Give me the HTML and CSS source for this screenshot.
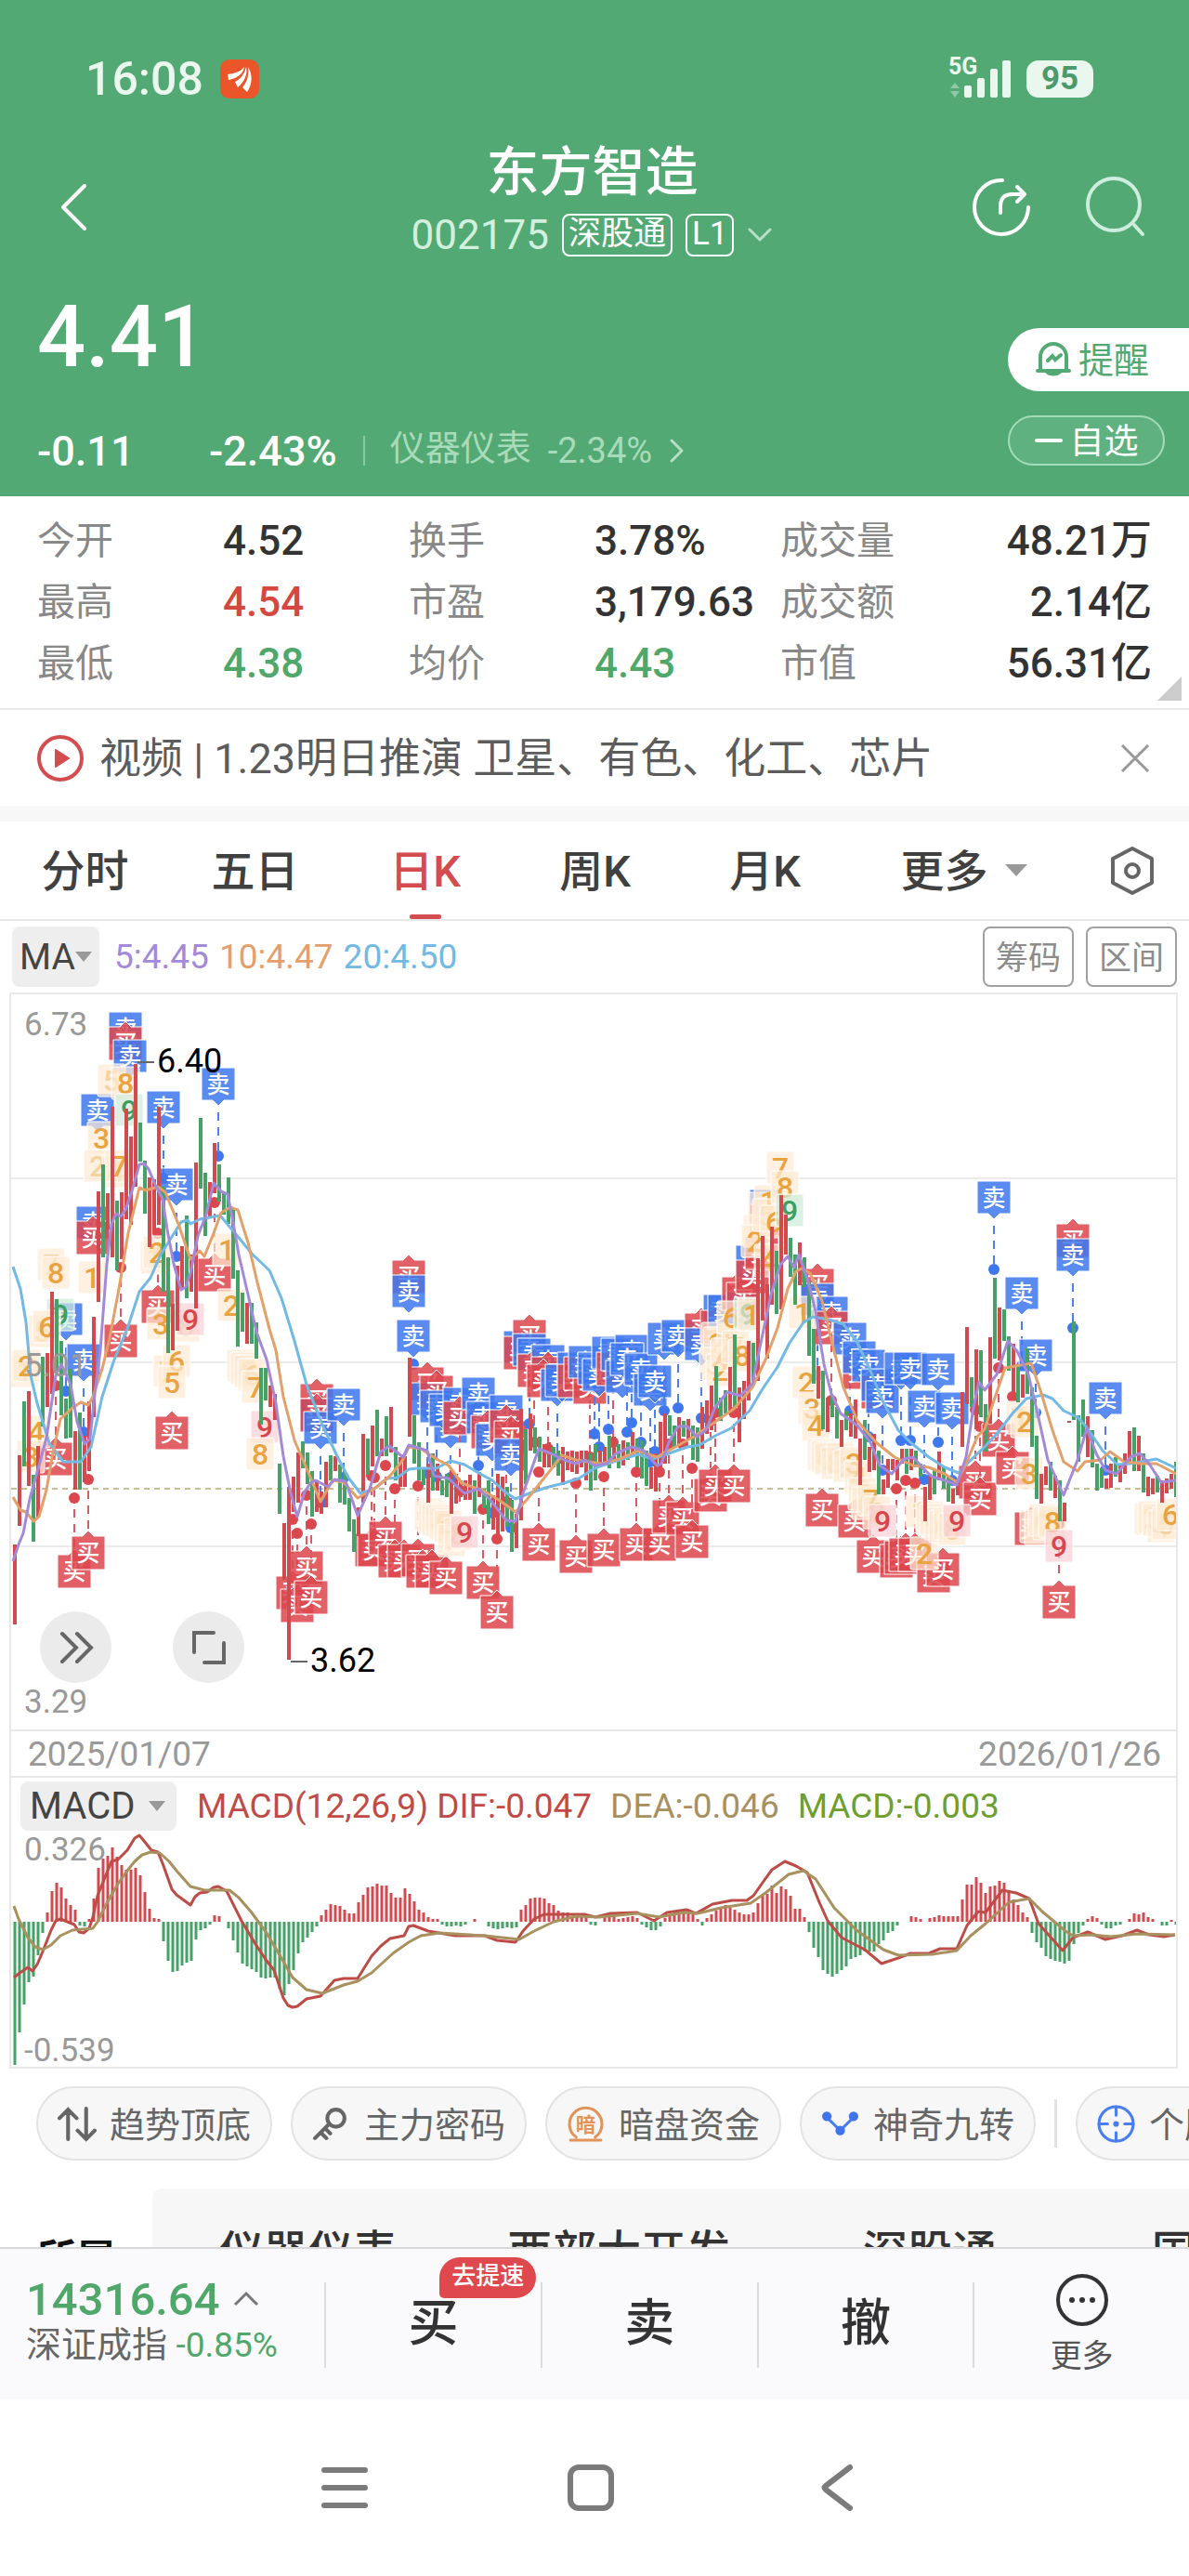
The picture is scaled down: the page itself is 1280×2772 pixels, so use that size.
FILE: index.html
```html
<!DOCTYPE html>
<html lang="zh-CN">
<head>
    <meta charset="UTF-8">
    <meta name="viewport" content="width=device-width, initial-scale=1.0">
    <title>东方智造 002175</title>
    <link rel="stylesheet" href="styles.css">
</head>
<body>
    <header class="header">
        <div class="status-bar">
            <span class="clock">16:08</span>
            <svg class="app-badge" viewBox="0 0 42 42">
                <rect width="42" height="42" rx="10" fill="#ea5529"/>
                <path d="M8 16c8-1 14-3 18-8-1 7-7 12-17 14zM16 24c6-3 10-8 12-16 2 9-3 17-9 22zM24 30c5-6 7-12 6-22 5 8 5 18-1 27z" fill="#fff"/>
            </svg>
            <div class="status-right">
                <svg class="signal" viewBox="0 0 70 50">
                    <text x="0" y="20" class="signal-text">5G</text>
                    <path d="M2 35l5-6 5 6zM2 38l5 7 5-7z" fill="#8fc9a5"/>
                    <rect x="17" y="32" width="8" height="13" rx="2"/>
                    <rect x="31" y="24" width="8" height="21" rx="2"/>
                    <rect x="45" y="14" width="8" height="31" rx="2"/>
                    <rect x="58" y="5" width="9" height="40" rx="2"/>
                </svg>
                <span class="battery">95</span>
            </div>
        </div>

        <div class="title-bar">
            <button class="icon-btn" aria-label="返回">
                <svg width="50" height="60" viewBox="0 0 50 60"><path d="M37 7L14 30l23 23" class="line"/></svg>
            </button>
            <div class="title-block">
                <h1>东方智造</h1>
                <div class="code-row">
                    <span class="code">002175</span>
                    <span class="tag">深股通</span>
                    <span class="tag">L1</span>
                    <svg width="28" height="18" viewBox="0 0 28 18"><path d="M3 3l11 11L25 3" class="line thin"/></svg>
                </div>
            </div>
            <div class="title-actions">
                <button class="icon-btn" aria-label="分享">
                    <svg width="66" height="66" viewBox="0 0 66 66">
                        <path d="M34 4A29 29 0 1 0 62 33" class="line"/>
                        <path d="M32 39v-7q0-13 13-13h12M50 11l8 8-8 8" class="line"/>
                    </svg>
                </button>
                <button class="icon-btn" aria-label="搜索">
                    <svg width="66" height="66" viewBox="0 0 66 66">
                        <circle cx="30" cy="30" r="28" class="line pale"/>
                        <path d="M52 52l9 10" class="line pale"/>
                    </svg>
                </button>
            </div>
        </div>

        <div class="quote">
            <div class="quote-left">
                <div class="price">4.41</div>
                <div class="change-row">
                    <span class="change">-0.11</span>
                    <span class="percent">-2.43%</span>
                    <a class="industry" href="#">
                        <span>仪器仪表</span>
                        <span>-2.34%</span>
                        <svg width="18" height="28" viewBox="0 0 18 28"><path d="M3 3l11 11L3 25" class="line thin"/></svg>
                    </a>
                </div>
            </div>
            <div class="quote-right">
                <button class="remind">
                    <svg width="38" height="40" viewBox="0 0 38 40">
                        <path d="M5 31V17a14 14 0 0 1 28 0v14M2 32h34M12 33a8 5 0 0 0 14 0M13 21l5-5 3 4 6-5" fill="none" stroke="#53a974" stroke-width="4" stroke-linecap="round"/>
                    </svg>
                    提醒
                </button>
                <button class="watch">
                    <i class="minus"></i>自选
                </button>
            </div>
        </div>
    </header>

    <section class="stats">
        <table>
            <tr><th>今开</th><td>4.52</td><th>换手</th><td>3.78%</td><th>成交量</th><td>48.21万</td></tr>
            <tr><th>最高</th><td class="up">4.54</td><th>市盈</th><td>3,179.63</td><th>成交额</th><td>2.14亿</td></tr>
            <tr><th>最低</th><td class="down">4.38</td><th>均价</th><td class="down">4.43</td><th>市值</th><td>56.31亿</td></tr>
        </table>
    </section>

    <div class="news">
        <svg width="52" height="52" viewBox="0 0 52 52">
            <circle cx="26" cy="26" r="23" fill="none" stroke="#d24c50" stroke-width="4"/>
            <path d="M21 17l14 9-14 9z" fill="#d24c50" stroke="#d24c50" stroke-width="2" stroke-linejoin="round"/>
        </svg>
        <a href="#">视频 | 1.23明日推演 卫星、有色、化工、芯片</a>
        <button class="icon-btn" aria-label="关闭">
            <svg width="32" height="32" viewBox="0 0 32 32"><path d="M2 2l28 28M30 2L2 30" stroke="#999" stroke-width="3" fill="none"/></svg>
        </button>
    </div>

    <nav class="tabs">
        <button>分时</button>
        <button>五日</button>
        <button class="active">日K</button>
        <button>周K</button>
        <button>月K</button>
        <button class="more">更多<i class="caret"></i></button>
        <button class="setting" aria-label="设置">
            <svg width="50" height="54" viewBox="0 0 50 54">
                <path d="M25 3L46 14v26L25 51 4 40V14z" fill="none" stroke="#666" stroke-width="4" stroke-linejoin="round"/>
                <circle cx="25" cy="27" r="7" fill="none" stroke="#666" stroke-width="4"/>
            </svg>
        </button>
    </nav>

    <div class="ma-row">
        <label class="picker">
            <select aria-label="主图指标"><option>MA</option></select>
            <i class="caret"></i>
        </label>
        <span class="ma5">5:4.45</span>
        <span class="ma10">10:4.47</span>
        <span class="ma20">20:4.50</span>
        <div class="ma-buttons">
            <button>筹码</button>
            <button>区间</button>
        </div>
    </div>

    <section class="panel">
        <div class="kline">
            <svg id="kline" viewBox="12 1070 1254 791"></svg>
            <div class="kline-tools">
                <button aria-label="展开">
                    <svg width="38" height="38" viewBox="0 0 38 38"><path d="M4 4l15 15L4 34M20 4l15 15-15 15"/></svg>
                </button>
                <button aria-label="全屏">
                    <svg width="38" height="38" viewBox="0 0 38 38"><path d="M3 24V3h21M35 14v21H14"/></svg>
                </button>
            </div>
        </div>
        <div class="dates">
            <span>2025/01/07</span>
            <span>2026/01/26</span>
        </div>
        <div class="macd-row">
            <label class="picker">
                <select aria-label="副图指标"><option>MACD</option></select>
                <i class="caret"></i>
            </label>
            <span class="dif">MACD(12,26,9) DIF:-0.047</span>
            <span class="dea">DEA:-0.046</span>
            <span class="macd">MACD:-0.003</span>
        </div>
        <svg id="macd" viewBox="12 1973 1254 251"></svg>
    </section>

    <div class="tools">
        <button>
            <svg viewBox="0 0 40 40"><path d="M11 36V6M2 14l9-9 9 9M30 4v31M21 27l9 9 9-9" stroke="#666" stroke-width="4"/></svg>
            <span>趋势顶底</span>
        </button>
        <button>
            <svg viewBox="0 0 40 40"><circle cx="25" cy="14" r="9" stroke="#666" stroke-width="4"/><path d="M18 20L3 35M9 29l6 6M14 25l5 5" stroke="#666" stroke-width="4"/></svg>
            <span>主力密码</span>
        </button>
        <button>
            <svg viewBox="0 0 40 40"><path d="M10 34a17 17 0 1 1 20 0M4 37h32" stroke="#e2935a" stroke-width="3"/><text x="20" y="28" class="coin">暗</text></svg>
            <span>暗盘资金</span>
        </button>
        <button>
            <svg viewBox="0 0 40 40"><path d="M6 13l14 14 14-14" stroke="#4a7df0" stroke-width="3"/><g fill="#4173ea"><circle cx="6" cy="12" r="5"/><circle cx="20" cy="27" r="5"/><circle cx="34" cy="12" r="5"/></g></svg>
            <span>神奇九转</span>
        </button>
        <i class="divider"></i>
        <button>
            <svg viewBox="0 0 40 40"><circle cx="20" cy="20" r="18" stroke="#4a7df0" stroke-width="3"/><circle cx="20" cy="20" r="3" fill="#4a7df0"/><path d="M20 2v9M20 29v9M2 20h9M29 20h9" stroke="#4a7df0" stroke-width="3"/></svg>
            <span>个股诊断</span>
        </button>
    </div>

    <div class="sectors">
        <b>所属</b>
        <div class="sector-list">
            <a href="#">仪器仪表</a>
            <a href="#">西部大开发</a>
            <a href="#">深股通</a>
            <a href="#">国企改革</a>
        </div>
    </div>

    <footer class="trade-bar">
        <div class="index">
            <div class="index-value">14316.64
                <svg width="28" height="18" viewBox="0 0 28 18"><path d="M2 15L14 3l12 12" fill="none" stroke="#777" stroke-width="3"/></svg>
            </div>
            <div class="index-name">深证成指 <span>-0.85%</span></div>
        </div>
        <button>买<span class="badge">去提速</span></button>
        <button>卖</button>
        <button>撤</button>
        <button class="trade-more">
            <svg width="56" height="56" viewBox="0 0 56 56">
                <circle cx="28" cy="28" r="26" fill="none" stroke="#333" stroke-width="4"/>
                <g fill="#333"><circle cx="17" cy="28" r="3"/><circle cx="28" cy="28" r="3"/><circle cx="39" cy="28" r="3"/></g>
            </svg>
            更多
        </button>
    </footer>

    <nav class="system-nav">
        <svg viewBox="0 0 52 52"><path d="M4 7h44M4 26h44M4 45h44"/></svg>
        <svg viewBox="0 0 52 52"><rect x="4" y="4" width="44" height="44" rx="9"/></svg>
        <svg viewBox="0 0 52 52"><path d="M40 4L14 24q-3 2 0 4l26 20"/></svg>
    </nav>

    <script src="chart.js"></script>
</body>
</html>
```
FILE: styles.css
```css
* {
    box-sizing: border-box;
}
body {
    margin: 0;
    background-color: #fff;
    color: #333;
    font-family: Roboto, "Noto Sans CJK SC", sans-serif;
    overflow-x: hidden;
}
button {
    font-family: inherit;
    color: inherit;
    background: none;
    border: none;
    padding: 0;
    cursor: pointer;
}
a {
    color: inherit;
    text-decoration: none;
}
svg {
    display: block;
    flex: none;
}
.line {
    fill: none;
    stroke: #fff;
    stroke-width: 4;
    stroke-linecap: round;
    stroke-linejoin: round;
}
.thin {
    stroke: #b5e0c4;
    stroke-width: 3;
}
.pale {
    stroke: #cdeedd;
}
.caret {
    border: 9px solid transparent;
    border-top: 11px solid #999;
    border-bottom: 0;
}

/* 顶部 */
.header {
    background-color: #53a974;
    color: #fff;
    padding: 56px 0 24px;
}
.status-bar {
    display: flex;
    align-items: center;
    height: 58px;
    padding: 0 103px 0 92px;
    color: #eaf7ef;
}
.clock {
    font-size: 50px;
    font-weight: 500;
}
.app-badge {
    width: 42px;
    margin-left: 18px;
}
.status-right {
    display: flex;
    align-items: center;
    gap: 14px;
    margin-left: auto;
}
.signal {
    width: 70px;
    fill: #eaf7ef;
    overflow: visible;
}
.signal-text {
    font-size: 25px;
    font-weight: 700;
}
.battery {
    width: 72px;
    height: 40px;
    border-radius: 13px;
    background-color: #eaf7ef;
    color: #4c9a6b;
    font-size: 35px;
    font-weight: 700;
    line-height: 40px;
    text-align: center;
}
.title-bar {
    display: flex;
    align-items: center;
    justify-content: space-between;
    height: 170px;
    margin-top: 24px;
    padding: 0 45px 0 54px;
}
.title-bar > .icon-btn {
    width: 176px;
}
.title-block {
    align-self: flex-start;
    padding-top: 16px;
    text-align: center;
}
h1 {
    margin: 0 0 12px;
    font-size: 57px;
    font-weight: 500;
    line-height: 64px;
}
.code-row {
    display: flex;
    align-items: center;
    gap: 14px;
    height: 46px;
}
.code {
    font-size: 44px;
    color: #d3f0de;
}
.tag {
    height: 46px;
    padding: 0 5px;
    border: 2px solid #fff;
    border-radius: 8px;
    font-size: 35px;
    line-height: 40px;
}
.title-actions {
    display: flex;
    gap: 58px;
}
.quote {
    display: flex;
    justify-content: space-between;
    padding-top: 15px;
}
.price {
    padding-left: 40px;
    font-size: 92px;
    font-weight: 500;
    line-height: 80px;
    margin-bottom: 57px;
}
.change-row {
    display: flex;
    align-items: center;
    height: 50px;
    padding-left: 40px;
    font-size: 45px;
    font-weight: 500;
}
.change {
    width: 185px;
}
.percent {
    margin-right: 28px;
}
.industry {
    display: flex;
    align-items: center;
    gap: 18px;
    height: 32px;
    padding-left: 27px;
    border-left: 2px solid #8ccba3;
    color: #a9dbba;
    font-size: 38px;
    line-height: 32px;
    font-weight: 400;
}
.industry span:first-child {
    padding-bottom: 6px;
}
.quote-right {
    display: flex;
    flex-direction: column;
    align-self: flex-end;
    width: 195px;
    padding-bottom: 9px;
}
.remind {
    display: flex;
    align-items: center;
    gap: 8px;
    height: 68px;
    margin-bottom: 26px;
    padding: 0 0 5px 30px;
    border-radius: 34px 0 0 34px;
    background-color: #fff;
    color: #53a974;
    font-size: 38px;
}
.remind svg {
    margin-top: 5px;
}
.watch {
    display: flex;
    align-items: center;
    justify-content: center;
    gap: 8px;
    width: 169px;
    height: 54px;
    padding-bottom: 5px;
    border: 2px solid #a5dcb8;
    border-radius: 27px;
    background-color: #5fb180;
    font-size: 37px;
}
.minus {
    width: 30px;
    height: 4px;
    margin-top: 5px;
    border-radius: 2px;
    background-color: #fff;
}

/* 行情数据 */
.stats {
    position: relative;
    padding: 15px 40px 15px;
    border-bottom: 2px solid #e8e8e8;
}
.stats::after {
    content: "";
    position: absolute;
    right: 8px;
    bottom: 8px;
    border: 13px solid #ccc;
    border-left-color: transparent;
    border-top-color: transparent;
}
table {
    width: 100%;
    table-layout: fixed;
    border-collapse: collapse;
}
th, td {
    height: 66px;
    padding: 0;
    text-align: left;
    line-height: 60px;
    white-space: nowrap;
}
th {
    color: #888;
    font-size: 41px;
    font-weight: 400;
}
td {
    font-size: 44px;
    font-weight: 500;
}
td:last-child {
    text-align: right;
}
.up {
    color: #d5483f;
}
.down {
    color: #4fa769;
}

.news {
    display: flex;
    align-items: center;
    gap: 16px;
    height: 120px;
    padding: 0 42px 0 39px;
    border-bottom: 17px solid #f7f7f7;
    color: #5c5c5c;
    font-size: 45px;
}
.news a {
    padding-bottom: 6px;
}
.news .icon-btn {
    margin-left: auto;
}

/* 周期切换 */
.tabs {
    display: flex;
    height: 107px;
    border-bottom: 2px solid #e8e8e8;
}
.tabs button {
    position: relative;
    width: 14.3%;
    padding-bottom: 6px;
    color: #404040;
    font-size: 47px;
    font-weight: 500;
}
.tabs .active {
    color: #d24c50;
}
.tabs .active::after {
    content: "";
    position: absolute;
    left: 50%;
    bottom: 0;
    width: 34px;
    height: 5px;
    margin-left: -17px;
    border-radius: 2px;
    background-color: #d24c50;
}
.tabs .more {
    display: flex;
    flex: 1;
    align-items: center;
    justify-content: center;
    gap: 18px;
}
.more .caret {
    margin-top: 6px;
    border-width: 13px 12px 0;
}
.tabs .setting {
    width: 120px;
    padding: 0 0 0 34px;
}

.ma-row {
    display: flex;
    align-items: center;
    gap: 11px;
    height: 77px;
    padding: 0 13px;
    font-size: 37px;
}
.picker {
    display: flex;
    align-items: center;
    height: 65px;
    padding: 0 8px;
    border-radius: 8px;
    background-color: #eee;
}
.picker select {
    appearance: none;
    border: none;
    padding: 0;
    background: none;
    color: #444;
    font-family: inherit;
    font-size: 39px;
}
.ma-row .picker {
    margin-right: 5px;
}
.ma5 {
    color: #a28ad9;
}
.ma10 {
    color: #e4a06a;
}
.ma20 {
    color: #72b9e4;
}
.ma-buttons {
    display: flex;
    gap: 13px;
    margin-left: auto;
}
.ma-buttons button {
    width: 98px;
    height: 65px;
    padding-bottom: 4px;
    border: 2px solid #a0a0a0;
    border-radius: 8px;
    color: #8c8c8c;
    font-size: 35px;
}

/* 图表 */
.panel {
    margin: 0 12px 0 10px;
    border: 2px solid #e8e8e8;
}
.panel > svg, .kline > svg {
    width: 100%;
}
.kline {
    position: relative;
}
.kline-tools {
    position: absolute;
    left: 31px;
    bottom: 50px;
    display: flex;
    gap: 66px;
}
.kline-tools button {
    display: flex;
    align-items: center;
    justify-content: center;
    width: 77px;
    height: 77px;
    border-radius: 50%;
    background-color: #ebebeb;
}
.kline-tools path {
    fill: none;
    stroke: #666;
    stroke-width: 4;
    stroke-linecap: round;
}
.grid {
    stroke: #ebebeb;
    stroke-width: 2;
}
.last {
    stroke: #c9bd98;
    stroke-width: 2;
    stroke-dasharray: 6 5;
}
.candle {
    stroke-width: 4;
}
.candle.r, .bar.r {
    stroke: #d04a50;
}
.candle.g, .bar.g {
    stroke: #45a166;
}
.bar {
    stroke-width: 3;
}
.ma {
    fill: none;
    stroke-width: 3;
    stroke-linejoin: round;
}
.axis {
    fill: #999;
    font-size: 35px;
}
.extreme {
    fill: #000;
    font-size: 36px;
}
.pointer {
    stroke: #666;
    stroke-width: 2;
}
.mark {
    stroke: #fff;
    stroke-width: 1;
    fill-opacity: 0.86;
}
.mark.s, .dot.s {
    fill: #3f78ee;
}
.mark.b, .dot.b {
    fill: #dc474e;
}
.stem {
    stroke-width: 2;
    stroke-dasharray: 9 7;
}
.stem.s {
    stroke: #4a7ff0;
}
.stem.b {
    stroke: #dc5a60;
}
.mark-text {
    fill: #fff;
    font-size: 25px;
    font-weight: 500;
    text-anchor: middle;
}
.nine {
    stroke: #fff;
    stroke-width: 1;
    fill: #fdebd6;
    fill-opacity: 0.7;
}
.nine.G {
    fill: #cdebd9;
}
.nine.R {
    fill: #f8d0d6;
}
.nine-text {
    fill: #e9a341;
    font-size: 32px;
    font-weight: 500;
    text-anchor: middle;
}
.nine-text.f {
    fill: #f5d3a0;
}
.nine-text.G {
    fill: #3f9f62;
}
.nine-text.R {
    fill: #d8464d;
}
.dates {
    display: flex;
    align-items: center;
    justify-content: space-between;
    height: 52px;
    padding: 0 16px 0 18px;
    border: solid #e8e8e8;
    border-width: 2px 0;
    color: #999;
    font-size: 37px;
}
.macd-row {
    display: flex;
    align-items: center;
    gap: 20px;
    height: 60px;
    padding-left: 10px;
    font-size: 37px;
}
.macd-row .picker {
    gap: 14px;
    height: 53px;
    padding: 0 12px 0 10px;
    margin-right: 2px;
}
.macd-row select {
    font-size: 40px;
}
.dif {
    color: #c04b46;
}
.dea {
    color: #a8905f;
}
.macd {
    color: #6d9f2f;
}

/* 工具入口 */
.tools {
    display: flex;
    align-items: center;
    gap: 20px;
    padding: 19px 0 30px 39px;
    overflow: hidden;
}
.tools button {
    display: flex;
    flex: none;
    align-items: center;
    gap: 15px;
    height: 80px;
    padding: 0 21px;
    border: 2px solid #e3e3e3;
    border-radius: 40px;
    background-color: #f7f7f7;
    color: #666;
    font-size: 38px;
}
.tools span {
    padding-bottom: 4px;
}
.tools svg {
    width: 41px;
    fill: none;
    stroke-linecap: round;
    overflow: visible;
}
.coin {
    fill: #e2935a;
    font-size: 21px;
    font-weight: 700;
    text-anchor: middle;
}
.divider {
    flex: none;
    width: 3px;
    height: 52px;
    background-color: #e3e3e3;
}
.sectors {
    display: flex;
    height: 63px;
    overflow: hidden;
}
.sectors b {
    width: 164px;
    padding: 52px 0 0 40px;
    flex: none;
    font-size: 42px;
    line-height: 48px;
    color: #111;
}
.sector-list {
    display: flex;
    flex: 1;
    min-width: 0;
    height: 140px;
    border-radius: 10px 0 0 0;
    background-color: #f7f7f7;
}
.sector-list a {
    flex: none;
    width: 30%;
    font-size: 48px;
    font-weight: 500;
    line-height: 138px;
    text-align: center;
    white-space: nowrap;
}

/* 底部交易栏 */
.trade-bar {
    display: flex;
    height: 164px;
    border-top: 2px solid #d8d8da;
    background-color: #fafafc;
}
.index {
    width: 349px;
    padding: 28px 0 0 28px;
    white-space: nowrap;
}
.index-value {
    display: flex;
    align-items: center;
    gap: 14px;
    height: 52px;
    color: #4fa769;
    font-size: 49px;
    font-weight: 500;
}
.index-name {
    color: #666;
    font-size: 38px;
    line-height: 46px;
}
.index-name span {
    color: #4fa769;
    font-size: 37px;
}
.trade-bar button {
    position: relative;
    flex: 1;
    height: 92px;
    margin-top: 36px;
    padding-bottom: 14px;
    border-left: 2px solid #dcdcdc;
    font-size: 54px;
    font-weight: 500;
}
.badge {
    position: absolute;
    left: 53%;
    top: -27px;
    height: 44px;
    padding: 0 13px;
    border-radius: 22px 22px 22px 5px;
    background-color: #df494d;
    color: #fff;
    font-size: 26px;
    line-height: 41px;
}
.trade-bar .trade-more {
    display: flex;
    flex-direction: column;
    align-items: center;
    justify-content: center;
    gap: 5px;
    padding: 0;
    color: #555;
    font-size: 34px;
    font-weight: 400;
}
.system-nav {
    display: flex;
    align-items: center;
    justify-content: center;
    gap: 213px;
    height: 189px;
    padding-right: 8px;
}
.system-nav svg {
    width: 52px;
    fill: none;
    stroke: #7b7b7b;
    stroke-width: 6;
    stroke-linecap: round;
}
```
FILE: chart.js
```js
// 每根K线: 颜色 最高点-最低点
const candles = `
r1662-1748 r1566-1642 g1508-1578 r1497-1599 g1587-1659 r1556-1633 g1460-1535 r1456-1514 r1390-1500 g1398-1477
g1443-1523 g1505-1548 g1473-1547 r1540-1603 g1520-1603 r1545-1595 r1508-1583 r1417-1525 r1282-1401 g1253-1353
r1284-1323 r1191-1353 g1292-1367 r1283-1355 r1193-1312 r1223-1318 r1145-1277 g1208-1250 g1249-1306 r1267-1342
r1269-1328 r1191-1318 g1277-1390 g1353-1456 r1403-1453 r1362-1432 r1341-1387 g1308-1397 r1350-1390 r1251-1408
g1203-1279 g1262-1330 r1272-1310 r1230-1284 g1253-1293 g1284-1307 g1267-1317 g1300-1376 g1367-1449 g1391-1433
r1402-1446 g1402-1446 g1423-1462 g1472-1533 g1472-1507 r1491-1514 r1500-1528 g1575-1629 r1639-1700 r1600-1786
r1589-1627 r1563-1617 g1551-1580 g1563-1597 g1583-1632 r1593-1627 r1605-1629 r1573-1622 g1566-1593 r1567-1583
g1576-1617 g1583-1619 g1612-1648 g1635-1670 r1622-1653 r1543-1617 g1548-1587 r1534-1578 g1517-1567 r1548-1567
g1524-1567 r1514-1563 g1557-1593 r1568-1600 r1567-1600 r1461-1546 g1523-1575 g1552-1593 g1579-1598 r1575-1617
g1564-1604 r1575-1604 g1593-1609 g1586-1611 r1582-1629 r1586-1618 r1593-1611 r1593-1614 r1587-1614 g1593-1629
r1584-1611 g1602-1623 g1593-1640 r1609-1646 r1586-1652 r1589-1648 g1600-1643 g1614-1670 r1629-1666 r1516-1636
g1538-1597 r1521-1561 g1536-1564 g1546-1573 r1554-1579 r1552-1579 g1557-1579 g1561-1588 r1557-1598 r1562-1582
r1561-1584 r1562-1586 r1561-1579 r1561-1593 g1564-1604 g1554-1593 r1561-1579 r1557-1575 g1545-1580 r1546-1571
g1554-1580 r1550-1577 g1552-1571 r1541-1568 g1548-1579 g1550-1591 g1561-1599 r1579-1602 r1564-1605 r1530-1579
r1521-1575 g1523-1545 g1534-1557 r1525-1554 g1529-1546 r1527-1550 g1534-1571 g1536-1573 r1514-1559 r1507-1543
r1491-1539 g1470-1516 g1504-1529 g1496-1521 r1471-1521 g1436-1514 r1493-1552 r1486-1527 r1443-1507 g1445-1491
r1354-1486 r1330-1421 r1382-1462 r1320-1404 g1346-1414 r1286-1409 r1307-1350 g1332-1374 g1350-1404 r1337-1383
g1353-1385 g1379-1459 g1430-1489 r1470-1505 g1475-1538 r1504-1541 g1502-1525 g1514-1548 r1528-1557 g1518-1539
r1521-1546 r1506-1548 r1548-1598 g1528-1571 r1557-1584 r1543-1582 g1561-1608 r1592-1608 r1570-1601 r1570-1582
r1571-1593 r1559-1575 g1559-1586 r1559-1582 g1561-1579 g1575-1589 r1600-1637 r1586-1614 g1582-1608 r1562-1593
g1579-1602 g1589-1616 r1602-1618 r1593-1609 r1498-1557 r1428-1511 g1482-1514 r1452-1532 g1453-1525 g1511-1562
r1439-1532 g1375-1462 r1407-1464 g1409-1443 g1438-1475 r1446-1498 g1468-1509 r1479-1504 g1451-1500 g1493-1557
g1545-1613 r1586-1618 r1578-1598 g1573-1604 r1588-1612 g1593-1637 r1617-1637 r1529-1531 g1422-1528 g1523-1573
g1506-1546 r1524-1568 g1539-1579 g1575-1604 g1580-1601 r1591-1602 r1575-1601 g1568-1589 r1575-1595 r1564-1586
r1540-1575 g1536-1583 r1545-1583 g1564-1606 r1589-1610 r1591-1608 g1588-1606 r1593-1617 r1591-1607 r1586-1602
g1573-1611`.trim().split(/\s+/);

const ma5 = `14,1680 20,1662 25,1650 32,1613 42,1577 50,1547 60,1480 66,1468 76,1490 83,1530 91,1554 97,1548 102,1500 108,1453
115,1360 120,1317 125,1306 130,1309 135,1302 142,1282 150,1253 155,1252 160,1258 167,1275 175,1290 180,1323 187,1360 195,1388
200,1385 205,1370 213,1330 222,1307 230,1273 238,1282 245,1285 250,1310 257,1350 267,1393 276,1433 287,1463 297,1510 305,1567
313,1607 320,1632 328,1605 335,1595 340,1593 353,1600 360,1592 372,1594 385,1631 398,1602 410,1562 419,1556 434,1568 440,1555
460,1561 467,1588 483,1591 500,1607 515,1602 527,1613 545,1636 555,1637 563,1607 580,1559 593,1564 607,1571 620,1575 630,1571
640,1577 653,1575 663,1564 680,1557 693,1561 707,1577 712,1575 720,1552 730,1535 740,1535 750,1546 760,1539 770,1514 783,1498
797,1502 810,1489 818,1450 830,1393 840,1361 848,1352 855,1364 860,1350 870,1379 878,1411 887,1468 895,1500 905,1521 923,1534
937,1552 947,1577 960,1586 973,1570 983,1568 993,1579 1003,1589 1017,1593 1030,1598 1040,1568 1048,1514 1054,1487 1060,1496
1073,1479 1085,1443 1095,1454 1107,1479 1117,1521 1128,1571 1145,1609 1160,1571 1170,1537 1180,1564 1190,1582 1202,1586
1217,1568 1227,1564 1237,1575 1250,1595 1266,1593`;

const ma10 = `14,1611 22,1625 28,1627 36,1637 42,1632 50,1603 57,1563 65,1527 78,1515 87,1509 95,1512 100,1503 110,1473 118,1440
128,1387 138,1327 150,1278 157,1281 170,1277 178,1283 192,1317 205,1355 215,1346 220,1352 230,1327 238,1305 248,1299 256,1302
267,1337 277,1380 290,1430 297,1453 305,1503 317,1550 333,1587 345,1616 358,1593 370,1595 385,1612 403,1602 420,1588 433,1572
440,1557 453,1559 470,1570 483,1577 497,1596 520,1604 537,1614 555,1627 567,1614 587,1589 605,1566 620,1571 647,1575 667,1570
687,1561 707,1568 727,1557 747,1546 767,1532 790,1516 810,1493 825,1461 837,1429 848,1387 857,1368 863,1365 872,1370 885,1400
897,1450 908,1493 923,1529 943,1552 963,1568 983,1577 1000,1579 1017,1586 1030,1595 1040,1575 1052,1546 1060,1538 1070,1507
1082,1472 1110,1467 1120,1496 1133,1539 1145,1573 1160,1583 1168,1573 1185,1571 1195,1562 1210,1573 1230,1575 1245,1575 1266,1586`;

const ma20 = `14,1363 22,1387 28,1423 33,1480 40,1510 53,1553 68,1573 87,1573 98,1557 110,1503 123,1463 137,1430 150,1390 162,1375
173,1350 195,1315 202,1313 205,1317 215,1312 237,1308 253,1327 272,1350 290,1367 303,1397 317,1443 330,1490 347,1533 363,1567
375,1590 388,1607 403,1602 417,1591 428,1590 440,1581 450,1580 470,1580 485,1572 500,1576 517,1586 530,1593 543,1605 555,1613
567,1608 587,1601 607,1596 623,1591 640,1580 660,1573 687,1565 703,1570 720,1564 740,1557 753,1555 770,1545 787,1537 807,1518
820,1496 837,1471 850,1445 865,1423 875,1417 893,1420 908,1425 922,1443 937,1475 950,1507 967,1539 980,1552 1000,1568 1017,1579
1032,1585 1043,1573 1060,1557 1073,1543 1090,1521 1105,1505 1123,1501 1133,1505 1145,1518 1160,1525 1170,1536 1187,1561
1203,1576 1217,1575 1245,1570 1266,1580`;

// 买卖点: 类型 中心x 顶部y [信号点y]
const marks = `
s,135,1089 b,135,1105 s,140,1119 s,105,1177 s,176,1174,1268 s,235,1149,1244 s,190,1257,1352 s,100,1298 b,100,1314
s,71,1402,1497 s,90,1446,1541 b,170,1388,1327 b,130,1425,1364 b,231,1354,1294 b,60,1552,1491 b,80,1673,1612 b,95,1653,1592
b,185,1524 b,341,1489 s,341,1505 b,341,1505 s,345,1519,1617 s,370,1494,1590 b,315,1696,1635 b,320,1710,1650 b,330,1669,1609
b,335,1701,1640 b,400,1650,1588 b,403,1650,1590 b,415,1637,1577 b,425,1662,1602 b,435,1662
b,440,1356 s,440,1372 s,445,1420,1468 b,460,1471 s,460,1488,1585 b,470,1480 s,470,1496,1589 s,485,1518,1590 s,480,1500
s,495,1493 b,495,1508,1604 s,515,1482,1577 s,520,1508 b,525,1523 s,530,1532,1628 s,545,1501 b,545,1517,1616 b,550,1529 s,550,1548,1644
s,560,1432 b,560,1438 b,570,1420 s,570,1435,1532 s,575,1440 b,575,1457,1552 s,590,1447 b,590,1460,1559 b,585,1468
s,600,1473,1570 s,605,1468 s,618,1455 b,618,1468 b,625,1460 b,635,1475,1568 s,630,1448 s,640,1455,1543 s,645,1462,1557
s,655,1438,1538 b,660,1455,1552 s,665,1440 s,670,1464 s,680,1436,1531 s,675,1445,1541 s,690,1456,1552 s,700,1478,1573 s,705,1469,1562
s,715,1423,1518 s,730,1420,1515 b,755,1413 s,755,1429,1526 s,775,1393 b,772,1410 s,780,1393 b,795,1374 s,800,1390 b,800,1380
s,810,1340 b,810,1356 s,825,1280 b,825,1296 b,820,1330
b,450,1661,1599 b,455,1673 b,465,1673 b,480,1680 b,520,1685,1624 b,535,1717,1656 b,580,1644,1584 b,620,1657,1596 b,650,1650,1589
b,685,1644,1584 b,710,1644,1584 b,720,1614,1554 b,735,1616,1554 b,745,1641,1580 b,765,1591,1529 b,770,1581,1520 b,790,1581,1520
b,880,1365 s,880,1381,1480 s,895,1395 b,895,1411,1507 s,915,1423,1518 b,925,1459 s,925,1443 s,935,1452,1546 b,945,1480 s,945,1473
s,950,1486,1582 s,970,1455,1550 s,980,1455,1550 s,995,1496,1592 s,1010,1456,1552 s,1025,1498,1593 s,1070,1271,1366
s,1100,1374,1470 s,1115,1441,1520 b,1155,1317 s,1155,1333,1429 s,1190,1487,1582
b,885,1607 b,920,1619 b,940,1657 b,965,1662,1602 b,970,1658 b,975,1655,1593 b,985,1655,1596 b,1005,1678 b,1015,1671
b,1050,1577,1517 b,1055,1595,1535 b,1075,1532,1472 b,1090,1562,1503 b,1110,1627 b,1140,1706,1640`.trim().split(/\s+/);

// 神奇九转: 数字 中心x 顶部y [G/R/f]
const nines = `
5,120,1145,f 8,135,1148 9,139,1177,G 3,109,1207 2,105,1237,f 4,125,1243,f 7,128,1237 7,55,1343,f 8,60,1352 1,99,1357 9,65,1397,G
5,45,1415,f 6,50,1410 1,26,1458,f 2,28,1452 4,39,1523 3,33,1550 1,166,1336,f 2,169,1330 1,244,1327 2,249,1387 3,173,1407
8,200,1409,f 9,205,1402,R 7,180,1458,f 6,190,1447 5,185,1470 3,259,1452,f 4,263,1455,f 5,267,1458,f 6,271,1462,f 7,275,1475
9,285,1518,R 8,280,1547
1,461,1612,f 2,465,1615,f 3,469,1617,f 4,473,1619,f 5,477,1622,f 6,482,1625,f 7,486,1640,f 8,493,1633,f 9,500,1631,R
1,770,1423,f 2,772,1428 3,768,1450,f 2,775,1457 5,787,1425 6,787,1400 4,780,1440,f 7,792,1432,f 8,799,1441 9,805,1396,G 1,809,1397
1,815,1307,f 2,813,1318 3,820,1283,f 4,827,1339 1,827,1275 5,825,1290,f 6,833,1297 7,840,1239 8,845,1260 9,850,1285,G
1,864,1395 2,868,1470 3,874,1498 4,878,1516 5,884,1548,f 6,888,1550,f 7,892,1552,f 8,899,1557,f 1,905,1552,f 2,912,1560,f 3,919,1557
4,924,1572,f 5,928,1590,f 6,932,1600,f 7,938,1596 8,944,1610,f 9,950,1619,R
1,990,1609,f 2,995,1654 3,1001,1615,f 4,1005,1618,f 5,1010,1622,f 6,1015,1625,f 7,1020,1622,f 8,1025,1628,f 9,1030,1619,R
1,1098,1508,f 2,1103,1512 3,1108,1568 4,1113,1625,f 5,1118,1628,f 6,1122,1618,f 7,1127,1622,f 8,1133,1620 9,1140,1646,R
1,1236,1617,f 2,1240,1615,f 3,1245,1618,f 4,1250,1625,f 5,1255,1622,f 6,1260,1612`.trim().split(/\s+/);

const bars = `2222 2187 2157 2133 2127 2104 2080 2058 2035 2026 2031 2043 2050 2055 2072 2073 2065 2043 2010 2000 1997 1988 1998 2007 2012
2012 2010 2018 2036 2054 2064 2065 2089 2110 2122 2121 2115 2112 2110 2087 2077 2075 2071 2061 2062 0 2075 2088 2101 2113
2116 2119 2122 2128 2129 2128 2128 2140 2147 2135 2120 2102 2090 2085 2079 2073 2061 2055 2049 2050 2051 2055 2059 2059 2047
2039 2031 2030 2027 2029 2029 2037 2042 2042 2032 2038 2046 2055 2058 2063 2065 2065 2071 2073 2073 2072 2073 2071 0 2065
0 0 2073 2075 2076 2075 2074 2075 2074 2055 2050 2043 2042 2042 2043 2048 2050 2056 2058 2058 2062 2061 2062 2063 2071
2072 0 2063 2060 2062 2065 2064 2063 2062 2064 2071 2074 2077 2077 2073 2064 2060 2058 2055 2055 2058 2060 2065 2072 2064
2060 2056 2052 2050 2053 2055 2058 2060 2060 2058 2048 2040 2038 2029 2037 2030 2033 2040 2054 2054 2063 2079 2096 2106 2120
2124 2127 2124 2120 2116 2108 2106 2104 2100 2100 2100 2092 2088 2080 2078 2072 0 0 2062 2063 2065 0 2064 2063 2061
2062 2062 2062 2062 2044 2028 2028 2020 2026 2037 2030 2029 2024 2026 2035 2044 2050 2058 2063 2080 2090 2096 2105 2108 2110
2111 2113 2110 2092 2080 2072 2065 2062 2064 2071 2075 2075 2072 2071 0 2065 2059 2060 2058 2063 2065 0 2072 2072 2066 2071`.trim().split(/\s+/).map(Number);

const dif = `15,2128 20,2124 30,2117 35,2121 40,2114 46,2100 55,2077 60,2067 65,2065 80,2071 85,2079 90,2080 96,2075 100,2063
105,2040 120,2003 127,2001 137,1991 145,1978 150,1975 155,1981 163,1991 170,1993 175,2005 185,2033 190,2039 205,2050 210,2041
215,2037 223,2036 230,2031 235,2030 244,2035 260,2067 275,2092 287,2110 295,2120 305,2150 310,2158 315,2160 320,2159 330,2151
345,2148 360,2131 370,2129 385,2129 400,2105 410,2094 420,2086 435,2083 440,2073 445,2072 461,2078 490,2083 522,2083 535,2088
555,2090 563,2078 575,2065 586,2060 629,2060 641,2063 657,2059 686,2058 704,2067 718,2058 739,2055 749,2059 767,2049 788,2045
804,2045 811,2040 823,2023 831,2012 845,2003 857,2008 869,2015 882,2047 891,2067 906,2085 931,2098 949,2113 967,2107 980,2102
1000,2102 1012,2097 1030,2097 1041,2072 1053,2057 1061,2058 1079,2034 1094,2037 1108,2043 1118,2070 1144,2099 1155,2085
1171,2079 1190,2087 1208,2083 1224,2077 1237,2082 1253,2084 1265,2082`;

const dea = `15,2051 20,2065 30,2085 38,2095 46,2098 55,2093 65,2083 78,2077 100,2075 105,2068 115,2048 127,2027 137,2013 145,2003
153,1996 162,1993 172,1994 182,2003 190,2013 205,2030 220,2034 247,2034 257,2042 270,2057 287,2080 300,2102 315,2128 330,2141
347,2145 370,2136 385,2132 400,2123 423,2102 440,2090 453,2083 473,2080 522,2083 559,2087 575,2078 596,2068 620,2062 645,2063
686,2059 710,2063 735,2058 751,2059 776,2053 808,2048 824,2037 849,2017 865,2013 878,2022 898,2053 922,2077 951,2098 967,2104
1004,2103 1030,2099 1045,2083 1061,2070 1086,2047 1108,2043 1122,2057 1147,2078 1155,2083 1176,2082 1196,2084 1224,2081 1265,2082`;

const STEP = 5;
const LEFT = 16;
const ZERO = 2068;

function line(cls, x1, y1, x2, y2) {
    return `<line class="${cls}" x1="${x1}" y1="${y1}" x2="${x2}" y2="${y2}"/>`;
}

function curve(color, points) {
    return `<polyline class="ma" stroke="${color}" points="${points}"/>`;
}

function text(cls, x, y, value) {
    return `<text class="${cls}" x="${x}" y="${y}">${value}</text>`;
}

function drawMark(item) {
    const [type, cx, top, dot] = item.split(',');
    const x = Number(cx);
    const y = Number(top);
    let out = '';
    if (dot) {
        const from = type === 's' ? y + 48 : Number(dot) + 12;
        const to = type === 's' ? Number(dot) : y - 6;
        out += line('stem ' + type, x, from, x, to);
        out += `<circle class="dot ${type}" cx="${x}" cy="${dot}" r="6"/>`;
    }
    // 卖点箭头朝下, 买点箭头朝上
    const shape = type === 's'
        ? `M${x - 18} ${y}h36v35h-12l-6 6-6-6h-12z`
        : `M${x - 18} ${y}h12l6-6 6 6h12v36h-36z`;
    out += `<path class="mark ${type}" d="${shape}"/>`;
    out += text('mark-text', x, y + 27, type === 's' ? '卖' : '买');
    return out;
}

function drawNine(item) {
    const [num, cx, top, kind = ''] = item.split(',');
    const x = Number(cx);
    const y = Number(top);
    return `<rect class="nine ${kind}" x="${x - 15}" y="${y}" width="30" height="35" rx="2"/>`
        + text('nine-text ' + kind, x, y + 29, num);
}

function drawKline() {
    let out = '';
    [1268, 1466, 1664].forEach(y => out += line('grid', 12, y, 1266, y));
    out += line('last', 12, 1602, 1266, 1602);
    marks.forEach(item => out += drawMark(item));
    nines.forEach(item => out += drawNine(item));
    candles.forEach((item, i) => {
        const [high, low] = item.slice(1).split('-');
        const x = LEFT + i * STEP;
        out += line('candle ' + item[0], x, high, x, low);
    });
    out += curve('#72b9e4', ma20) + curve('#e4a06a', ma10) + curve('#a28ad9', ma5);
    out += text('axis', 26, 1114, '6.73') + text('axis', 26, 1481, '5.01') + text('axis', 26, 1843, '3.29');
    out += line('pointer', 148, 1143, 166, 1143) + text('extreme', 169, 1154, '6.40');
    out += line('pointer', 313, 1788, 331, 1788) + text('extreme', 334, 1799, '3.62');
    document.getElementById('kline').innerHTML = out;
}

function drawMacd() {
    let out = '';
    bars.forEach((y, i) => {
        if (!y) return;
        const x = LEFT + i * STEP;
        out += line('bar ' + (y > ZERO ? 'g' : 'r'), x, ZERO, x, y);
    });
    out += curve('#bd4c46', dif) + curve('#a8905f', dea);
    out += text('axis', 26, 2002, '0.326') + text('axis', 26, 2218, '-0.539');
    document.getElementById('macd').innerHTML = out;
}

drawKline();
drawMacd();
```
